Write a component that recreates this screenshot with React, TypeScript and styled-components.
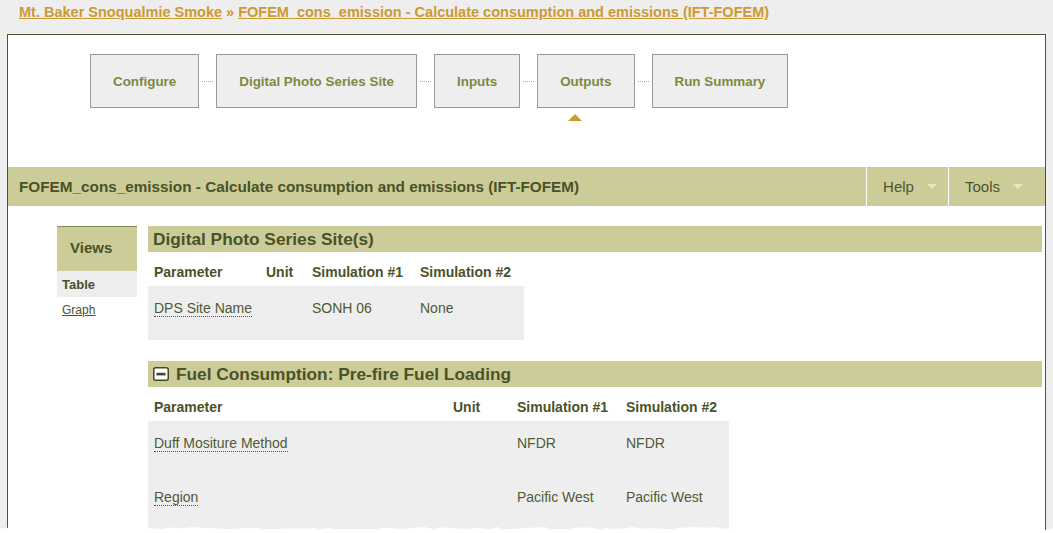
import React from "react";
import styled, { createGlobalStyle } from "styled-components";

const GlobalStyle = createGlobalStyle`
  html, body { margin: 0; padding: 0; background: #eeeeee; }
  body { font-family: "Liberation Sans", Arial, sans-serif; overflow: hidden; }
  * { box-sizing: border-box; }
`;

const Page = styled.div`
  padding: 0 7px;
  height: 533px;
  overflow: hidden;
`;

const Breadcrumb = styled.div`
  height: 34px;
  padding: 4px 0 0 12px;
  font-size: 14.5px;
  line-height: 17px;
  font-weight: bold;
  color: #cc9933;
`;

const Crumb = styled.a`
  color: #cc9933;
  text-decoration: underline;
`;

const Sep = styled.span`
  margin: 0 4px;
`;

const Panel = styled.div`
  background: #ffffff;
  border: 1px solid #4f5530;
  border-bottom: none;
  min-height: 499px;
`;

const Steps = styled.div`
  display: flex;
  align-items: center;
  padding: 19px 0 0 82px;
`;

const Step = styled.div`
  position: relative;
  height: 54px;
  padding: 1px 22px 0;
  display: flex;
  align-items: center;
  background: #eeeeee;
  border: 1px solid #999999;
  color: #808840;
  font-size: 13.4px;
  font-weight: bold;
  white-space: nowrap;
`;

const Connector = styled.div`
  width: 11px;
  margin: 0 3px;
  border-top: 1px dotted #aaaaaa;
`;

const Pointer = styled.div`
  position: absolute;
  left: 30px;
  top: 59px;
  width: 0;
  height: 0;
  border-left: 7px solid transparent;
  border-right: 7px solid transparent;
  border-bottom: 7px solid #cc9933;
`;

const Toolbar = styled.div`
  margin-top: 59px;
  height: 39px;
  background: #cccc99;
  display: flex;
  align-items: stretch;
`;

const ToolbarTitle = styled.div`
  flex: 1;
  display: flex;
  align-items: center;
  padding-left: 11px;
  font-size: 15.3px;
  font-weight: bold;
  color: #4a5228;
`;

const MenuItem = styled.div<{ $pr: number }>`
  display: flex;
  align-items: center;
  gap: 13px;
  padding: 0 ${(p) => p.$pr}px 0 16px;
  border-left: 1px solid #ffffff;
  font-size: 15px;
  color: #4a5530;
`;

const Caret = styled.span`
  width: 0;
  height: 0;
  border-left: 5px solid transparent;
  border-right: 5px solid transparent;
  border-top: 5px solid #e6e6c8;
`;

const Body = styled.div`
  display: flex;
  align-items: flex-start;
  gap: 11px;
  padding: 20px 3px 0 49px;
`;

const Sidebar = styled.div`
  width: 80px;
  flex: none;
`;

const ViewsHeader = styled.div`
  height: 45px;
  background: #cccc99;
  border-top: 1px solid #7d8a4c;
  display: flex;
  align-items: center;
  padding: 0 0 3px 13px;
  font-size: 15px;
  font-weight: bold;
  color: #4a5228;
`;

const ViewItem = styled.div<{ $active?: boolean }>`
  height: 26px;
  display: flex;
  align-items: center;
  padding-left: 5px;
  background: ${(p) => (p.$active ? "#eeeeee" : "transparent")};
  font-size: ${(p) => (p.$active ? "13px" : "12px")};
  font-weight: ${(p) => (p.$active ? "bold" : "normal")};
  color: #4a5228;
  text-decoration: ${(p) => (p.$active ? "none" : "underline")};
`;

const Content = styled.div`
  flex: 1;
`;

const Section = styled.div`
  margin-bottom: 21px;
`;

const SectionHeader = styled.div`
  height: 26px;
  background: #cccc99;
  display: flex;
  align-items: center;
  gap: 6px;
  padding-left: 5px;
  font-size: 17.3px;
  font-weight: bold;
  color: #4a5228;
`;

const SectionTitle = styled.span`
  padding-left: 1px;
`;

const Table = styled.table`
  border-collapse: collapse;
  table-layout: fixed;
  margin-top: 4px;
`;

const Th = styled.th<{ $w: number }>`
  width: ${(p) => p.$w}px;
  height: 30px;
  padding: 1px 6px 0;
  text-align: left;
  font-size: 14px;
  font-weight: bold;
  color: #4a5228;
`;

const Tr = styled.tr`
  background: #eeeeee;
`;

const Td = styled.td`
  height: 54px;
  padding: 14px 6px 0;
  vertical-align: top;
  font-size: 14px;
  line-height: 16px;
  color: #4f5a34;
`;

const ParamName = styled.span`
  border-bottom: 1px dotted #555555;
`;

const Torn = styled.svg`
  position: fixed;
  left: 0;
  bottom: 0;
  width: 1053px;
  height: 9px;
  pointer-events: none;
`;

const MinusIcon = () => (
  <svg width="16" height="14" viewBox="0 0 16 14">
    <rect x="0.75" y="0.75" width="14.5" height="12.5" rx="2" fill="#ffffff" stroke="#3f4a24" strokeWidth="1.5" />
    <rect x="3.5" y="5.8" width="9" height="2.6" fill="#3f4a24" />
  </svg>
);

function tornPoints() {
  const pts: string[] = ["0,9"];
  let x = 0;
  let seed = 7;
  const rnd = () => {
    seed = (seed * 9301 + 49297) % 233280;
    return seed / 233280;
  };
  while (x < 1053) {
    const y = 3 + rnd() * 3.5;
    pts.push(`${x.toFixed(1)},${y.toFixed(1)}`);
    x += 5 + rnd() * 9;
  }
  pts.push("1053,4", "1053,9");
  return pts.join(" ");
}

const steps = ["Configure", "Digital Photo Series Site", "Inputs", "Outputs", "Run Summary"];

export default function App() {
  return (
    <>
      <GlobalStyle />
      <Page>
        <Breadcrumb>
          <Crumb>Mt. Baker Snoqualmie Smoke</Crumb>
          <Sep>»</Sep>
          <Crumb>FOFEM_cons_emission - Calculate consumption and emissions (IFT-FOFEM)</Crumb>
        </Breadcrumb>
        <Panel>
          <Steps>
            {steps.map((s, i) => (
              <React.Fragment key={s}>
                {i > 0 && <Connector />}
                <Step>
                  {s}
                  {s === "Outputs" && <Pointer />}
                </Step>
              </React.Fragment>
            ))}
          </Steps>
          <Toolbar>
            <ToolbarTitle>FOFEM_cons_emission - Calculate consumption and emissions (IFT-FOFEM)</ToolbarTitle>
            <MenuItem $pr={11}>
              Help <Caret />
            </MenuItem>
            <MenuItem $pr={22}>
              Tools <Caret />
            </MenuItem>
          </Toolbar>
          <Body>
            <Sidebar>
              <ViewsHeader>Views</ViewsHeader>
              <ViewItem $active>Table</ViewItem>
              <ViewItem>Graph</ViewItem>
            </Sidebar>
            <Content>
              <Section>
                <SectionHeader>Digital Photo Series Site(s)</SectionHeader>
                <Table>
                  <thead>
                    <tr>
                      <Th $w={112}>Parameter</Th>
                      <Th $w={46}>Unit</Th>
                      <Th $w={108}>Simulation #1</Th>
                      <Th $w={110}>Simulation #2</Th>
                    </tr>
                  </thead>
                  <tbody>
                    <Tr>
                      <Td><ParamName>DPS Site Name</ParamName></Td>
                      <Td></Td>
                      <Td>SONH 06</Td>
                      <Td>None</Td>
                    </Tr>
                  </tbody>
                </Table>
              </Section>
              <Section>
                <SectionHeader>
                  <MinusIcon />
                  <SectionTitle>Fuel Consumption: Pre-fire Fuel Loading</SectionTitle>
                </SectionHeader>
                <Table>
                  <thead>
                    <tr>
                      <Th $w={299}>Parameter</Th>
                      <Th $w={64}>Unit</Th>
                      <Th $w={109}>Simulation #1</Th>
                      <Th $w={109}>Simulation #2</Th>
                    </tr>
                  </thead>
                  <tbody>
                    <Tr>
                      <Td><ParamName>Duff Mositure Method</ParamName></Td>
                      <Td></Td>
                      <Td>NFDR</Td>
                      <Td>NFDR</Td>
                    </Tr>
                    <Tr>
                      <Td><ParamName>Region</ParamName></Td>
                      <Td></Td>
                      <Td>Pacific West</Td>
                      <Td>Pacific West</Td>
                    </Tr>
                  </tbody>
                </Table>
              </Section>
            </Content>
          </Body>
        </Panel>
      </Page>
      <Torn viewBox="0 0 1053 9" preserveAspectRatio="none">
        <polygon points={tornPoints()} fill="#ffffff" />
      </Torn>
    </>
  );
}
